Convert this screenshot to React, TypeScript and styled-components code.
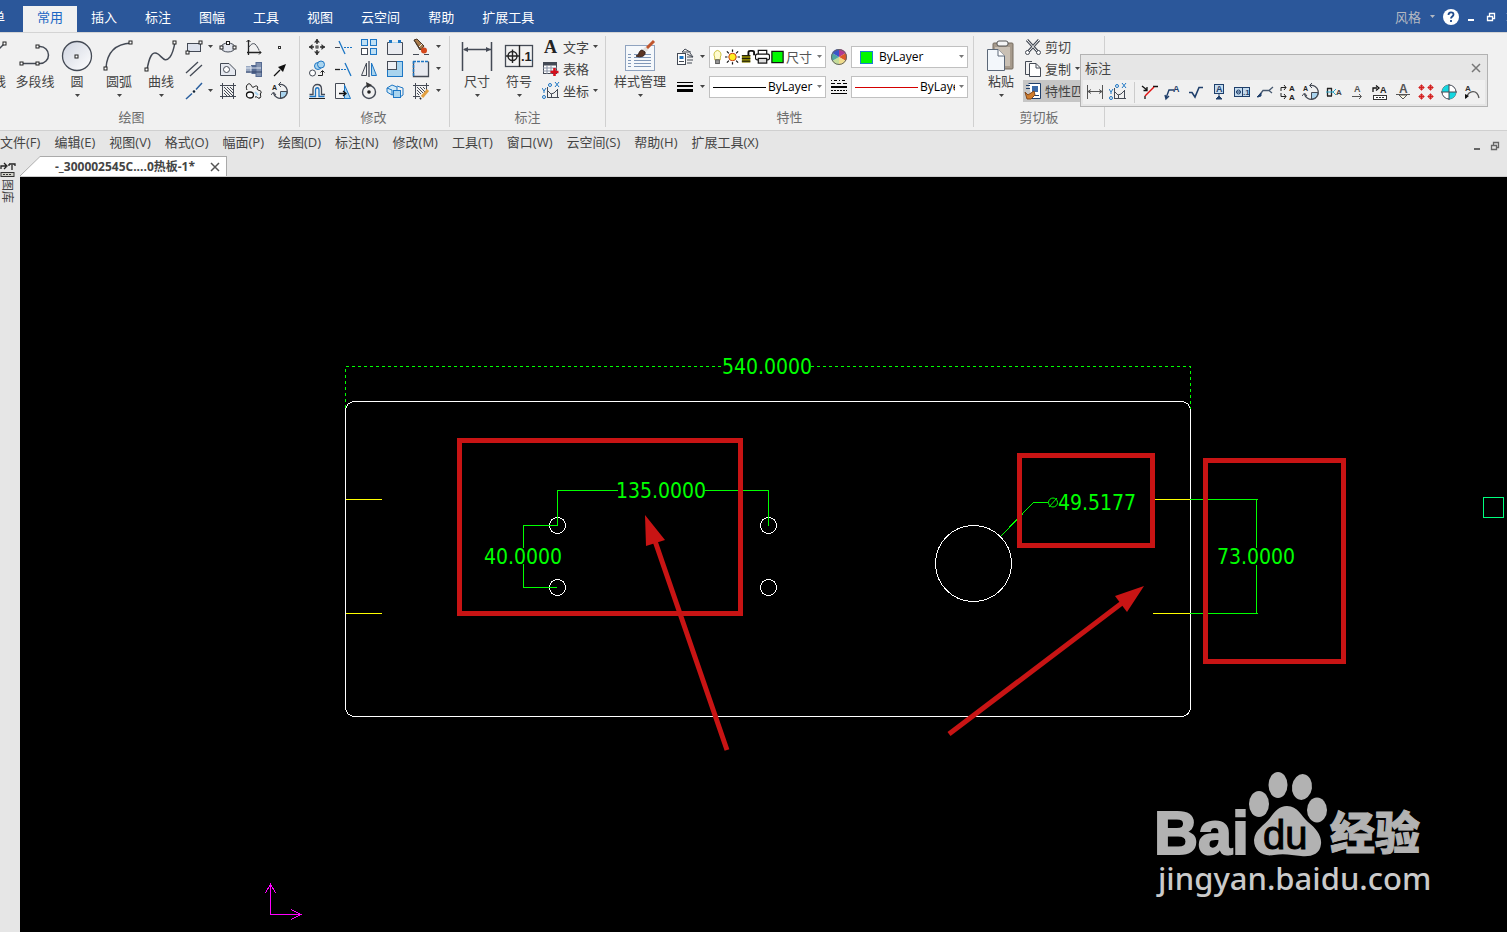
import React from 'react';
import styled, { createGlobalStyle, css } from 'styled-components';

const GlobalStyle = createGlobalStyle`
  * { box-sizing: border-box; }
  body {
    margin: 0;
    overflow: hidden;
    background: #e6e6e6;
    color: #444;
    font: 13px/16px "Open Sans", "Noto Sans CJK SC", sans-serif;
  }
  button, select { font: inherit; color: inherit; }
`;

const plainButton = css`
  border: 0;
  margin: 0;
  padding: 0;
  background: none;
  white-space: nowrap;
`;

const Page = styled.div`
  position: relative;
  display: flex;
  flex-direction: column;
  min-height: 100vh;
  overflow: hidden;
`;

/* ---------- title tabs ---------- */

const TitleBar = styled.header`
  display: flex;
  justify-content: space-between;
  height: 32px;
  background: #2b579a;
  overflow: hidden;
`;

const TabList = styled.nav`
  display: flex;
  align-items: flex-end;
  margin-left: -35px;
`;

const RibbonTab = styled.button<{ $active?: boolean; $first?: boolean }>`
  ${plainButton}
  height: 26px;
  padding: 0 14px 4px;
  margin-right: ${p => (p.$first ? 4 : 0)}px;
  color: ${p => (p.$active ? '#1a66c4' : '#fff')};
  background: ${p => (p.$active ? '#f1f1f1' : 'transparent')};
`;

const TitleTools = styled.div`
  display: flex;
  align-items: center;
  gap: 2px;
  height: 34px;
  margin-right: -13px;
  flex: none;
`;

const StyleButton = styled.button`
  ${plainButton}
  display: flex;
  align-items: center;
  gap: 8px;
  padding-right: 4px;
  color: #b4b9c2;
`;

const IconButton = styled.button`
  ${plainButton}
  display: flex;
  align-items: center;
  justify-content: center;
  width: 18px;
  height: 18px;
`;

/* ---------- ribbon ---------- */

const Ribbon = styled.section`
  display: flex;
  height: 99px;
  padding: 3px 0;
  background: #f1f1f1;
  border-top: 1px solid #d4d4d4;
  border-bottom: 1px solid #d0d0d0;
  overflow: hidden;
`;

const Group = styled.div<{ $width: number; $pad?: number }>`
  display: flex;
  flex-direction: column;
  flex: none;
  width: ${p => p.$width}px;
  padding-left: ${p => p.$pad ?? 0}px;
  border-right: 1px solid #d0d0d0;
`;

const GroupBody = styled.div`
  display: flex;
  height: 72px;
`;

const GroupTitle = styled.div<{ $shift?: boolean }>`
  line-height: 18px;
  text-align: center;
  color: #6d6d6d;
  padding-right: ${p => (p.$shift ? 36 : 6)}px;
`;

const BigButton = styled.button<{ $wide?: boolean; $cut?: boolean }>`
  ${plainButton}
  display: flex;
  flex: none;
  flex-direction: column;
  align-items: center;
  width: ${p => (p.$wide ? 56 : 42)}px;
  margin-left: ${p => (p.$cut ? -28 : 0)}px;
  padding-top: 2px;
`;

const BigLabel = styled.span`
  line-height: 14px;
`;

const ArrowSlot = styled.span`
  display: flex;
  align-items: center;
  height: 16px;
`;

const ToolGrid = styled.div<{ $cols: string }>`
  display: grid;
  grid-template-columns: ${p => p.$cols};
  grid-auto-rows: 22px;
  align-items: center;
  justify-items: center;
`;

const ToolButton = styled.button`
  ${plainButton}
  display: flex;
  justify-content: center;
`;

const Rows = styled.div`
  display: flex;
  flex-direction: column;
`;

const RowButton = styled.button<{ $pressed?: boolean }>`
  ${plainButton}
  display: flex;
  align-items: center;
  gap: 3px;
  height: 22px;
  padding: 0 1px;
  margin-left: 1px;
  background: ${p => (p.$pressed ? '#c6c6c6' : 'none')};
`;

const Properties = styled.div`
  display: grid;
  grid-template-columns: 22px 13px 117px 25px 117px;
  grid-auto-rows: 22px;
  row-gap: 8px;
  padding: 10px 0 0 6px;
  align-items: center;
  justify-items: center;
`;

const Combo = styled.label<{ $tight?: boolean }>`
  display: flex;
  align-items: center;
  width: 117px;
  height: 22px;
  padding-left: ${p => (p.$tight ? 0 : 3)}px;
  background: #fff;
  border: 1px solid #c0c0c0;
  color: #000;
  font-size: 12px;
`;

const ComboSelect = styled.select<{ $large?: boolean; $soft?: boolean; $gap?: number }>`
  flex: 1;
  min-width: 0;
  height: 20px;
  padding: 0;
  margin-left: ${p => p.$gap ?? 2}px;
  border: 0;
  appearance: none;
  background: none;
  font-size: ${p => (p.$large ? 13 : 12)}px;
  color: ${p => (p.$soft ? '#555' : '#000')};
`;

const ComboArrow = styled.span`
  display: flex;
  flex: none;
  justify-content: center;
  width: 12px;
  color: #777;
`;

const Swatch = styled.span`
  width: 13px;
  height: 13px;
  margin: 0 0 0 5px;
  border: 1px solid #1a7fd0;
  background: #00f800;
`;

const Rule = styled.span<{ $red?: boolean }>`
  width: ${p => (p.$red ? 63 : 53)}px;
  flex: none;
  height: 1px;
  background: ${p => (p.$red ? '#d40000' : '#000')};
`;

/* ---------- floating tool bar ---------- */

const FloatPanel = styled.aside`
  position: absolute;
  top: 54px;
  right: 19px;
  width: 408px;
  height: 53px;
  padding: 0 2px;
  background: #e6e6e6;
  border: 1px solid #b2b2b2;
`;

const FloatHead = styled.div`
  display: flex;
  align-items: center;
  justify-content: space-between;
  height: 25px;
  padding: 1px 0 0 2px;
`;

const FloatTools = styled.div`
  display: flex;
  align-items: center;
  height: 24px;
  background: #f0f0f0;
`;

const FloatTool = styled.button`
  ${plainButton}
  display: flex;
  justify-content: center;
  width: 23px;
`;

const FloatDivider = styled.span`
  width: 1px;
  height: 21px;
  margin: 0 3px 0 5px;
  background: #ccc;
`;

/* ---------- menu bar, document tabs ---------- */

const MenuBar = styled.nav`
  display: flex;
  justify-content: space-between;
  height: 24px;
  overflow: hidden;
`;

const MenuItems = styled.div`
  display: flex;
  gap: 14px;
  height: 22px;
`;

const MenuItem = styled.button`
  ${plainButton}
`;

const MenuTools = styled.div`
  display: flex;
  align-items: center;
  height: 30px;
  margin-right: -15px;
  color: #666;
`;

const Workspace = styled.div`
  display: flex;
  flex: 1;
`;

const SideDock = styled.div`
  display: flex;
  flex-direction: column;
  flex: none;
  width: 20px;
  padding-top: 6px;
`;

const SideTab = styled.button`
  ${plainButton}
  display: flex;
  flex-direction: column;
  align-items: flex-start;
  width: 15px;
`;

const SideLabel = styled.span`
  writing-mode: vertical-rl;
  text-orientation: sideways;
  font-size: 12px;
  line-height: 14px;
`;

const MainArea = styled.main`
  display: flex;
  flex-direction: column;
  flex: 1;
  min-width: 0;
`;

const DocTabs = styled.div`
  display: flex;
  align-items: flex-end;
  height: 22px;
  border-bottom: 1px solid #ccc;
`;

const DocTab = styled.div`
  display: flex;
  align-items: center;
  height: 20px;
  padding-left: 15px;
  padding-right: 2px;
  background: #fff;
  border-top: 1px solid #aaa;
  border-right: 1px solid #aaa;
  font-weight: 700;
  font-size: 12px;
  gap: 11px;
`;

const DocCorner = styled.svg`
  display: block;
  flex: none;
`;

const Canvas = styled.div`
  flex: 1;
  background: #000;
  overflow: hidden;
`;

const Drawing = styled.svg`
  display: block;
`;

/* ---------- icons ---------- */

const INK = '#444a55';
const BLUE = '#1d76c4';
const SKY = '#a9d4ee';
const NAVY = '#1f3f6b';

const Caret = ({ color = '#444' }: { color?: string }) => (
  <svg width="7" height="4" viewBox="0 0 7 4" aria-hidden="true">
    <path d="M1 0H6L3.5 3Z" fill={color} />
  </svg>
);

const Knob = ({ x, y }: { x: number; y: number }) => (
  <rect x={x - 1.5} y={y - 1.5} width="3" height="3" fill="#fff" stroke="#222" />
);

const Letter = ({ x, y, size = 8, children, fill = '#222' }: {
  x: number; y: number; size?: number; children: string; fill?: string;
}) => (
  <text x={x} y={y} fontSize={size} fontWeight="700" fontFamily="Liberation Sans, sans-serif" fill={fill} stroke="none">
    {children}
  </text>
);

const coordinate = (
  <>
    <path d="M5.500 5V16M5 15.500H17M5 8L9 12L12 11L16 7M15.500 7V15M9.500 12V15" stroke={INK} />
    <path d="M0 6L2 9M4 6L2 9V11M13 0L17 5M17 0L13 5" stroke={BLUE} />
    <circle cx="2" cy="15" r="1.500" stroke={BLUE} />
    <circle cx="8" cy="3" r="1.500" stroke={BLUE} />
  </>
);

const balloon = (
  <>
    <path d="M8 2.500A7 7 0 1 1 2.500 11" stroke={INK} strokeWidth="1.300" />
    <path d="M9.500 9.500H16A6.500 6.500 0 0 1 9.500 16Z" fill={SKY} stroke={INK} />
    <path d="M10 0L7.500 2.500L10 5M0 13L2.500 10L5 13" stroke={INK} />
    <Letter x={1} y={8} size={7}>A</Letter>
  </>
);

const small: Record<string, React.ReactNode> = {
  rect: (
    <>
      <rect x="2.500" y="5.500" width="13" height="8" fill="#dde2ec" stroke={INK} />
      <Knob x={15.5} y={4.5} /><Knob x={2.5} y={14.5} />
    </>
  ),
  parallel: <path d="M1 13L13 2M5 16L17 5" stroke={INK} strokeWidth="1.300" />,
  axis: (
    <>
      <path d="M1 17L7 11.500M11 7.500L17 1" stroke="#2a5f9e" strokeWidth="1.500" />
      <circle cx="9" cy="9.500" r="1.300" fill="#123" />
    </>
  ),
  ellipse: (
    <>
      <ellipse cx="9" cy="9.500" rx="7" ry="4.500" fill="#e3e6ee" stroke={INK} />
      <Knob x={9} y={5} /><Knob x={2.5} y={9.5} /><Knob x={15.5} y={9.5} />
    </>
  ),
  shape: (
    <>
      <path d="M1.500 3.500H10L16.500 10V15.500H1.500Z" fill="#e6e9f0" stroke={INK} />
      <circle cx="7.500" cy="9.500" r="3" fill="#fff" stroke={INK} />
    </>
  ),
  hatch: (
    <>
      <path d="M3.500 1V17M14.500 1V17M1 3.500H17M1 14.500H17" stroke={INK} />
      <path d="M5 8L11 14M5 5L14 14M8 5L14 11M11 5L14 8M5 11L8 14" stroke={INK} />
    </>
  ),
  curve: (
    <>
      <path d="M3.500 2V17M2 14.500H16" stroke="#222" strokeWidth="1.300" />
      <path d="M1.500 4L3.500 2L5.500 4M14 12.500L16 14.500L14 16.500" stroke="#222" />
      <path d="M4 9C6 6 8 5 10 6C12 8 13 10 14 12" stroke={INK} />
    </>
  ),
  shaft: (
    <>
      <rect x="1" y="6" width="5" height="7" fill="#9aa9c2" />
      <rect x="6" y="5" width="5" height="9" fill="#566b92" />
      <rect x="11" y="2.500" width="5.500" height="14" fill="#8292b0" stroke="#566b92" />
      <path d="M1 8H16M6 6V14" stroke="#dfe6f2" />
      <path d="M1 12H17" stroke="#33456a" />
    </>
  ),
  wave: (
    <>
      <path d="M2 8C0 4 3 1 5 2C7 3 6 6 9 5C11 3 14 4 12 7C13 9 17 8 16 11C14 12 17 14 15 16C12 17 13 14 10 15" stroke="#111" />
      <ellipse cx="5" cy="13" rx="3.500" ry="3" fill="#fff" stroke="#111" strokeWidth="1.300" />
      <path d="M10 10L13 13" stroke={SKY} strokeWidth="2" />
    </>
  ),
  dot: <rect x="7.500" y="8.500" width="2" height="2" fill="#fff" stroke="#333" />,
  arrow: (
    <>
      <path d="M3 16L9 10" stroke="#111" strokeWidth="1.300" />
      <path d="M15 4L12 12L7 7Z" fill="#111" />
    </>
  ),
  balloon,
  move: (
    <>
      <path d="M9 1V6M9 12V17M1 9H6M12 9H17" stroke="#333" strokeWidth="1.500" />
      <path d="M9 1L6 4.500H12ZM9 17L6 13.500H12ZM1 9L4.500 6V12ZM17 9L13.500 6V12Z" fill="#333" />
      <rect x="8" y="8" width="2" height="2" fill="#fff" stroke="#333" />
    </>
  ),
  copyShape: (
    <>
      <circle cx="4.500" cy="13" r="3" fill="#fff" stroke={INK} />
      <circle cx="10" cy="6" r="3.500" fill={SKY} stroke={BLUE} />
      <circle cx="13" cy="4.500" r="3.500" fill={SKY} stroke={BLUE} />
      <path d="M10 15.500H14.500V11M12.500 12.500L14.500 10.500L16.500 12.500" stroke="#222" />
    </>
  ),
  offset: (
    <>
      <path d="M1.500 12.500H5V7C5 1 13.500 1 13.500 7V12.500H17" stroke={INK} strokeWidth="1.300" />
      <path d="M1.500 14.500H7.500V8C7.500 5 11 5 11 8V14.500H16.500" stroke={BLUE} strokeWidth="1.300" />
      <path d="M1 16.500H17" stroke="#222" />
    </>
  ),
  trim: (
    <>
      <path d="M1 9.500H6" stroke={INK} />
      <path d="M5 3L11 16" stroke={BLUE} strokeWidth="1.300" />
      <path d="M10 9.500H18" stroke={BLUE} strokeDasharray="2 1" />
    </>
  ),
  extend: (
    <>
      <path d="M1 9.500H6" stroke="#222" strokeWidth="1.300" />
      <path d="M7 9.500H13" stroke={BLUE} strokeDasharray="2 1" />
      <path d="M11 3L17 16" stroke={BLUE} strokeWidth="1.300" />
    </>
  ),
  stretch: (
    <>
      <path d="M1.500 1.500H10.500V16.500H1.500Z" fill="#f6f6f6" stroke={INK} />
      <path d="M10.500 3L16.500 16.500H10.500Z" fill={SKY} stroke={BLUE} />
      <path d="M5 11.500H11M9 9L12 11.500L9 14" stroke="#111" strokeWidth="1.300" />
    </>
  ),
  array: (
    <>
      <rect x="1.500" y="1.500" width="6" height="6" fill="#bfe0f4" stroke={BLUE} />
      <rect x="10.500" y="1.500" width="6" height="6" fill="#bfe0f4" stroke={BLUE} />
      <rect x="1.500" y="10.500" width="6" height="6" fill="#fff" stroke={INK} />
      <rect x="10.500" y="10.500" width="6" height="6" fill="#bfe0f4" stroke={BLUE} />
    </>
  ),
  mirror: (
    <>
      <path d="M6.500 3V15.500H1.500Z" fill="#eee" stroke={INK} />
      <path d="M9 1V17" stroke={INK} strokeWidth="1.300" />
      <path d="M11.500 3V15.500H16.500Z" fill={SKY} stroke={BLUE} />
    </>
  ),
  rotate: (
    <>
      <circle cx="9" cy="10" r="6.500" stroke={INK} strokeWidth="1.400" />
      <circle cx="9" cy="10" r="1.800" fill="#222" />
      <path d="M6 0L12 3L7 6Z" fill="#333" />
    </>
  ),
  breakAt: (
    <>
      <path d="M4 4.500H1.500V16.500H16.500V4.500H14" fill="#e9ebf0" stroke={INK} />
      <path d="M6 4.500H12" stroke={SKY} />
      <rect x="3" y="2" width="3" height="3" fill={BLUE} /><rect x="12" y="2" width="3" height="3" fill={BLUE} />
    </>
  ),
  scale: (
    <>
      <rect x="1.500" y="1.500" width="15" height="15" fill={SKY} stroke={BLUE} />
      <rect x="1.500" y="1.500" width="9" height="8" fill="#eef0f4" stroke={INK} />
    </>
  ),
  block: (
    <>
      <path d="M1 6L6 3L11 5V11L6 13L1 10ZM1 6L6 8V13" fill="#d2eaf7" stroke={BLUE} />
      <path d="M11 4L17 6V13L14 15" stroke={BLUE} />
      <rect x="7.500" y="8.500" width="7" height="7" fill={SKY} stroke={BLUE} />
    </>
  ),
  erase: (
    <>
      <path d="M2 2L11 9L8 12Z" fill="#bd9461" stroke="#3a2f28" />
      <path d="M2 2L5 1L12 8L9 12Z" fill="#a87b4c" stroke="#4a3626" />
      <path d="M7 9L10 6" stroke="#eee" />
      <circle cx="12" cy="12.500" r="3" fill="#d4481c" />
      <path d="M1 16.500H7M12 16.500H17" stroke={INK} />
    </>
  ),
  region: (
    <>
      <path d="M1.500 1.500V16.500H16.500V1.500" fill="#e8eaf0" stroke={INK} strokeWidth="1.300" />
      <path d="M1 1.500H17M1.500 1V16" stroke={BLUE} strokeWidth="1.500" strokeDasharray="3 1" />
    </>
  ),
  hatchEdit: (
    <>
      <path d="M3.500 1V17M14.500 1V8M1 3.500H17M1 14.500H8" stroke={INK} />
      <path d="M5 8L9 12M5 5L11 11M8 5L13 10M5 11L7 13M11 5L13 7" stroke={INK} />
      <path d="M16 8L10 15" stroke="#e2a041" strokeWidth="3" />
      <path d="M9 16L8 17" stroke="#222" strokeWidth="2" />
    </>
  ),
  table: (
    <>
      <rect x="1.500" y="2.500" width="13" height="11" fill="#fff" stroke={INK} />
      <path d="M1 4H15" stroke={INK} strokeWidth="3" />
      <path d="M1 8H15M1 11H15M5 5V14M9 5V14" stroke="#8a93a5" />
      <path d="M12.500 8V16M8.500 12H16.500" stroke="#d40f1c" strokeWidth="2.600" />
    </>
  ),
  letterA: (
    <text x="2" y="15" fontSize="18" fontWeight="700" fontFamily="Liberation Serif, serif" fill="#222">A</text>
  ),
  coordinate,
  layers: (
    <>
      <path d="M6 4L9 1L14 4M6 4H15M14 5L17 9M11 6L17 9M11 9H17M11 12H17M11 15H16" stroke={INK} />
      <rect x="1.500" y="5.500" width="8" height="11" fill="#fff" stroke={INK} />
      <rect x="3.500" y="8" width="4" height="3" fill={BLUE} />
      <path d="M3 13.500H8" stroke={INK} />
    </>
  ),
  weights: (
    <>
      <rect x="1" y="4" width="16" height="1" fill="#000" />
      <rect x="1" y="7" width="16" height="2" fill="#000" />
      <rect x="1" y="11" width="16" height="3" fill="#000" />
    </>
  ),
  types: (
    <g shapeRendering="crispEdges">
      <path d="M1 2.500H17" stroke="#000" strokeDasharray="1 2 3 2" />
      <path d="M1 5.500H17" stroke="#000" strokeDasharray="4 2" />
      <path d="M1 9H17" stroke="#000" strokeWidth="2" />
      <path d="M1 12.500H17" stroke="#000" strokeDasharray="2 1" />
      <path d="M1 15.500H17" stroke="#000" />
    </g>
  ),
  wheel: (
    <>
      <path d="M9 9V1A8 8 0 0 1 15.900 5Z" fill="#b33a8e" />
      <path d="M9 9L15.900 5A8 8 0 0 1 15.900 13Z" fill="#dd5a28" />
      <path d="M9 9L15.900 13A8 8 0 0 1 9 17Z" fill="#f0dc8c" />
      <path d="M9 9V17A8 8 0 0 1 2.100 13Z" fill="#c5dc9a" />
      <path d="M9 9L2.100 13A8 8 0 0 1 2.100 5Z" fill="#51a8a0" />
      <path d="M9 9L2.100 5A8 8 0 0 1 9 1Z" fill="#3b55c8" />
      <circle cx="9" cy="9" r="7.500" stroke="#666" />
    </>
  ),
  cut: (
    <>
      <path d="M3 2L14 14M15 2L4 14" stroke={INK} strokeWidth="3" />
      <path d="M3 2L13 13M15 2L5 13" stroke="#fff" />
      <circle cx="3.500" cy="14.500" r="2" fill="#fff" stroke={INK} /><circle cx="14.500" cy="14.500" r="2" fill="#fff" stroke={INK} />
    </>
  ),
  copy: (
    <>
      <path d="M8 1.500H1.500V14.500H5" stroke={INK} />
      <path d="M5.500 3.500H12L16.500 8V16.500H5.500Z" fill="#fff" stroke={INK} />
      <path d="M12 3.500V8H16.500" stroke={INK} />
    </>
  ),
  match: (
    <>
      <path d="M4.500 1.500H16.500V16.500H8" fill="#fff" stroke={NAVY} />
      <rect x="8" y="4" width="6" height="6" fill="#3a6aa8" />
      <path d="M2 3.500H6M2 6.500H6M11 13.500H15" stroke={NAVY} />
      <path d="M1 10L4 13L10 9L11 13L7 17H3Z" fill="#cf7c2c" stroke="#84481a" />
    </>
  ),
  dimension: <path d="M1.500 2V16M16.500 2V16M2 8.500H16M5 6.500L2 8.500L5 10.500M13 6.500L16 8.500L13 10.500" stroke="#555" />,
  chamfer: (
    <>
      <path d="M1 3L6 7M6 4V7.500H2.500M12 3.500H17M4 16V13" stroke="#111" strokeWidth="1.300" />
      <path d="M4 13L13 4" stroke="#e01010" strokeWidth="1.500" />
    </>
  ),
  leaderA: (
    <>
      <path d="M2 15L5 7H10M1 12L2 16L5 13" stroke={NAVY} strokeWidth="1.400" />
      <Letter x={9} y={9} size={9} fill={NAVY}>A</Letter>
    </>
  ),
  rough: <path d="M2 9.500H5L8 14L12 4.500H16" stroke={NAVY} strokeWidth="1.600" />,
  datum: (
    <>
      <rect x="4.500" y="1.500" width="9" height="9" fill="#c5dbee" stroke={NAVY} />
      <Letter x={6} y={9} size={9} fill={NAVY}>A</Letter>
      <path d="M9 11V14M9 13L6 16H12Z" fill={NAVY} stroke={NAVY} />
    </>
  ),
  tolerance: (
    <>
      <rect x="1.500" y="4.500" width="15" height="9" fill="#c5dbee" stroke={NAVY} />
      <circle cx="5.500" cy="9" r="2" stroke={NAVY} /><path d="M3 9H8M9.500 5V13" stroke={NAVY} />
      <Letter x={10} y={12} size={8} fill={NAVY}>.1</Letter>
    </>
  ),
  leader: (
    <>
      <path d="M2 14L7 7.500H13L17 4M13 7.500L16 10" stroke="#46586f" strokeWidth="1.300" />
      <path d="M1 14L5 10L5 13Z" fill={NAVY} stroke={NAVY} />
    </>
  ),
  swapA: (
    <>
      <path d="M7 4.500H2V8M5 2L7 4.500L5 7M2 10V13.500H7M5 11L7 13.500L5 16" stroke="#222" />
      <Letter x={10} y={8} size={8}>A</Letter><Letter x={10} y={17} size={8}>A</Letter>
    </>
  ),
  gapA: (
    <>
      <path d="M2.500 5V13M6.500 5V13M2 5.500H7M2 13H7" stroke="#222" strokeWidth="1.300" />
      <path d="M11 6L8 9L11 12M1 9H8" stroke="#2aa6c8" />
      <Letter x={11} y={12} size={8} fill="#444">A</Letter>
    </>
  ),
  arrowA: (
    <>
      <Letter x={6} y={9} size={9} fill="#555">A</Letter>
      <path d="M4 13.500H13M11 11L13.500 13.500L11 16" stroke="#555" />
    </>
  ),
  rulerA: (
    <>
      <path d="M2 9V5H6M5 2.500L8 5L5 7.500" stroke="#111" strokeWidth="1.300" />
      <Letter x={9} y={10} size={9}>A</Letter>
      <rect x="2.500" y="12.500" width="13" height="4" fill="#fff" stroke="#333" /><path d="M5 14.500H13" stroke="#333" strokeDasharray="2 1" />
    </>
  ),
  markA: (
    <>
      <Letter x={5} y={10} size={12} fill="#555">A</Letter>
      <path d="M2 11.500H16M5 12L9 16L13 12Z" fill="#fffbe8" stroke="#555" />
    </>
  ),
  holes: (
    <>
      {[[4.5, 4.5], [13.5, 4.5], [4.5, 13.5], [13.5, 13.5]].map(([x, y]) => (
        <g key={`${x}-${y}`} stroke="#d32020">
          <circle cx={x} cy={y} r="2" fill="#f4c4bb" />
          <path d={`M${x - 3} ${y}H${x + 3}M${x} ${y - 3}V${y + 3}`} />
        </g>
      ))}
    </>
  ),
  center: (
    <>
      <circle cx="9" cy="9" r="7" fill="#fff" stroke={INK} />
      <path d="M9 9V2A7 7 0 0 0 2 9ZM9 9V16A7 7 0 0 0 16 9Z" fill="#14d7e0" />
      <path d="M9 1V17M1 9H17" stroke={INK} />
    </>
  ),
  arcA: (
    <>
      <Letter x={2} y={8} size={8} fill="#333">A</Letter>
      <path d="M3 15C6 7 14 6 16 15" stroke="#555" strokeWidth="1.300" /><path d="M2 16V11L6 13Z" fill="#111" />
    </>
  ),
  bulb: (
    <>
      <path d="M9 2A4.500 4.500 0 0 0 6 9V12H12V9A4.500 4.500 0 0 0 9 2Z" fill="#fffcd0" stroke="#c9bd3a" />
      <rect x="7" y="12" width="4" height="4" fill="#999" stroke="#555" />
    </>
  ),
  sun: (
    <>
      <path d="M9 1V17M1 9H17M3 3L15 15M15 3L3 15" stroke="#111" strokeWidth="1.300" />
      <circle cx="9" cy="9" r="5.500" fill="#fff" />
      <circle cx="9" cy="9" r="4" fill="#ffee22" stroke="#c03018" />
    </>
  ),
  lock: (
    <>
      <path d="M10 8V4Q10 2.500 12 2.500H14Q16 2.500 16 4V7" stroke="#111" strokeWidth="2" />
      <rect x="3" y="7" width="9" height="8" fill="#8a8200" /><path d="M3 7.500H12M3 10.500H12M3 13.500H12" stroke="#111" />
    </>
  ),
  printer: (
    <>
      <path d="M4.500 6V2H13.500V6" fill="#fff" stroke="#111" strokeWidth="1.300" />
      <rect x="1.500" y="6" width="15" height="6" rx="2" fill="#fff" stroke="#111" strokeWidth="1.300" />
      <rect x="4.500" y="10.500" width="9" height="5" fill="#ddd" stroke="#111" strokeWidth="1.300" />
    </>
  ),
  layerColor: <rect x="3" y="3" width="12" height="12" fill="#00f800" stroke="#111" strokeWidth="1.300" />,
  sideRuler: (
    <>
      <path d="M1 8V5H6M4 2L7 5L4 8M9 3H15V5M9 3V5M12 4V9" stroke="#222" strokeWidth="1.300" />
      <rect x="1" y="11.500" width="13" height="4" fill="#d0d0c8" stroke="#333" /><path d="M3 13.500H11" stroke="#333" strokeDasharray="2 1" />
    </>
  ),
};

const Icon = ({ name }: { name: string }) => (
  <svg width="18" height="18" viewBox="0 0 18 18" fill="none" aria-hidden="true">{small[name]}</svg>
);

const LayerIcon = ({ name }: { name: string }) => (
  <svg width="15" height="18" viewBox="1 0 16 18" fill="none" aria-hidden="true">{small[name]}</svg>
);

const big: Record<string, React.ReactNode> = {
  line: <><path d="M5 30L30 5" stroke={INK} strokeWidth="1.500" /><Knob x={29.5} y={5.5} /></>,
  polyline: (
    <>
      <path d="M4 25.500H23A8.500 8.500 0 0 0 23 8.500H20" stroke={INK} strokeWidth="1.500" />
      <Knob x={4.5} y={25.5} /><Knob x={20.5} y={25.5} /><Knob x={20.5} y={8.5} />
    </>
  ),
  circle: (
    <>
      <defs>
        <linearGradient id="disc" x1="0" y1="0" x2="1" y2="1">
          <stop offset="0" stopColor="#cfd4e0" /><stop offset="1" stopColor="#fff" />
        </linearGradient>
      </defs>
      <circle cx="18" cy="18" r="14.500" fill="url(#disc)" stroke={INK} strokeWidth="1.300" />
      <Knob x={17.5} y={18.5} />
    </>
  ),
  arc: <><path d="M5 30C6 14 14 6 30 5" stroke={INK} strokeWidth="1.500" /><Knob x={4.5} y={30.5} /><Knob x={29.5} y={4.5} /></>,
  spline: (
    <>
      <path d="M4 32C6 20 9 12 15 16C20 20 22 25 27 19C30 15 31 10 32 4" stroke={INK} strokeWidth="1.500" />
      <Knob x={3.5} y={31.5} /><Knob x={31.5} y={4.5} />
    </>
  ),
  dimension: (
    <>
      <path d="M3.500 4V33M32.500 4V33M5 11.500H32" stroke={INK} strokeWidth="1.500" />
      <path d="M4 11.500L9 9V14ZM32 11.500L27 9V14Z" fill={INK} />
    </>
  ),
  symbol: (
    <>
      <rect x="4.500" y="7.500" width="27" height="21" fill="#f2f2f2" stroke={INK} strokeWidth="1.300" />
      <path d="M18.500 7V29M5 18H18M11.500 11.500V25" stroke="#222" strokeWidth="1.400" />
      <circle cx="11.500" cy="18" r="4.500" stroke="#222" strokeWidth="1.400" />
      <Letter x={20} y={23} size={13}>.1</Letter>
    </>
  ),
  style: (
    <>
      <rect x="3.500" y="7.500" width="29" height="25" fill="#f5f8fb" stroke="#8fa3bf" />
      <path d="M6 16.500H9M6 19.500H9M6 22.500H9M6 25.500H9M6 28.500H9M12 16.500H29M12 19.500H29M12 22.500H29M12 25.500H29M12 28.500H29" stroke="#7f97b8" />
      <path d="M32 3L24 11" stroke="#c0552c" strokeWidth="3" />
      <path d="M25 10L21 14" stroke="#e4e0dc" strokeWidth="4" />
      <path d="M20 12C16 13 18 17 14 18C19 20 24 18 23 14Z" fill="#5a3422" stroke="#33201a" />
    </>
  ),
  paste: (
    <>
      <rect x="10" y="5" width="20" height="26" rx="1" fill="#a69a8c" stroke="#766c60" />
      <rect x="14" y="3" width="11" height="5" rx="2" fill="#f4f4f4" stroke="#555" />
      <path d="M12 9H27V28H12Z" fill="#c9c0b4" />
      <path d="M4.500 11.500H15L21.500 18V32.500H4.500Z" fill="#f3f7fb" stroke="#5c6878" />
      <path d="M15 11.500V18H21.500" fill="#fff" stroke="#5c6878" />
    </>
  ),
};

const BigTool = ({ icon, label, wide, cut, menu = true }: {
  icon: string; label: string; wide?: boolean; cut?: boolean; menu?: boolean;
}) => (
  <BigButton $wide={wide} $cut={cut} type="button">
    <svg width="36" height="36" viewBox="0 0 36 36" fill="none" aria-hidden="true">{big[icon]}</svg>
    <BigLabel>{label}</BigLabel>
    {menu && <ArrowSlot><Caret /></ArrowSlot>}
  </BigButton>
);

const Cell = ({ name }: { name: string }) =>
  name === 'caret' ? <ToolButton type="button" aria-label="more"><Caret /></ToolButton>
    : name === '' ? <span />
      : <ToolButton type="button" aria-label={name}><Icon name={name} /></ToolButton>;

const RowTool = ({ icon, label, menu, pressed }: { icon: string; label: string; menu?: boolean; pressed?: boolean }) => (
  <RowButton type="button" $pressed={pressed}>
    <Icon name={icon} />
    <span>{label}</span>
    {menu && <Caret />}
  </RowButton>
);

const WindowGlyph = ({ kind, color }: { kind: 'min' | 'restore' | 'close'; color: string }) => (
  <svg width="10" height="10" viewBox="0 0 10 10" fill="none" stroke={color} aria-hidden="true">
    {kind === 'min' && <path d="M2 8H8" strokeWidth="2" />}
    {kind === 'restore' && <path d="M3.500 4V1.500H8.500V6.500H7M1.500 4.500H6.500V8.500H1.500ZM1 4.500H7M3 1.500H9" strokeWidth="1.300" />}
    {kind === 'close' && <path d="M1 1L9 9M9 1L1 9" strokeWidth="1.500" />}
  </svg>
);

const TABS = ['菜单', '常用', '插入', '标注', '图幅', '工具', '视图', '云空间', '帮助', '扩展工具'];
const MENUS = ['文件(F)', '编辑(E)', '视图(V)', '格式(O)', '幅面(P)', '绘图(D)', '标注(N)', '修改(M)', '工具(T)', '窗口(W)', '云空间(S)', '帮助(H)', '扩展工具(X)'];
const DRAW = ['rect', 'caret', 'ellipse', 'curve', 'dot', 'parallel', '', 'shape', 'shaft', 'arrow', 'axis', 'caret', 'hatch', 'wave', 'balloon'];
const MODIFY = ['move', 'trim', 'array', 'breakAt', 'erase', 'caret', 'copyShape', 'extend', 'mirror', 'scale', 'region', 'caret', 'offset', 'stretch', 'rotate', 'block', 'hatchEdit', 'caret'];
const FLOAT = ['chamfer', 'leaderA', 'rough', 'datum', 'tolerance', 'leader', 'swapA', 'balloon', 'gapA', 'arrowA', 'rulerA', 'markA', 'holes', 'center', 'arcA'];

const GREEN = '#00ff00';
const RED = '#c81414';

const CadDrawing = () => (
  <Drawing width="1487" height="755" viewBox="20 177 1487 755" fill="none" role="img" aria-label="零件图">
    <g shapeRendering="crispEdges" strokeWidth="1">
      <rect x="345.500" y="401.500" width="845" height="315" rx="9" stroke="#fff" />
      <path d="M345.500 408V366.500H722M811 366.500H1190.500V409" stroke={GREEN} strokeDasharray="3 3" />
      <path d="M346 499.500H382M346 613.500H382M1155 499.500H1190M1153 613.500H1190" stroke="#ff0" />
      <path d="M1190 499.500H1258M1190 613.500H1258M1256.500 499V548M1256.500 565V613" stroke={GREEN} />
      <g stroke="#fff">
        <circle cx="557.500" cy="525.500" r="8" /><circle cx="768.500" cy="525.500" r="8" />
        <circle cx="557.500" cy="587.500" r="8" /><circle cx="768.500" cy="587.500" r="8" />
        <circle cx="973.500" cy="563.500" r="38" />
      </g>
      <path d="M557.500 525V490.500H618M705 490.500H768.500V526" stroke={GREEN} />
      <path d="M558 525.500H523.500V548M523.500 564V587.500H557" stroke={GREEN} />
      <path d="M1000.500 536.500L1033.500 502.500H1048" stroke={GREEN} />
      <path d="M270.500 884V914.500H301M265.500 893L270.500 884L275.500 893M291 909.500L301 914.500L291 919.500" stroke="#f0f" />
      <rect x="1483.500" y="497.500" width="20" height="20" stroke="#00ff7f" />
    </g>
    <circle cx="1053" cy="502.500" r="4.500" stroke={GREEN} />
    <path d="M1049 507L1057 498" stroke={GREEN} />
    <g fill={GREEN} fontFamily="'DejaVu Sans Condensed', 'Noto Sans', sans-serif" fontSize="21" textAnchor="middle">
      <text x="767" y="374">540.0000</text>
      <text x="661" y="498">135.0000</text>
      <text x="523" y="564">40.0000</text>
      <text x="1097" y="510">49.5177</text>
      <text x="1256" y="564">73.0000</text>
    </g>
    <g stroke={RED} strokeWidth="5">
      <rect x="459.500" y="440.500" width="281" height="173" />
      <rect x="1019.500" y="455.500" width="133" height="90" />
      <rect x="1205.500" y="460.500" width="138" height="201" />
      <path d="M655 541L727 750M1122 603L949 734" />
    </g>
    <path d="M645 515L665 540L646 546ZM1144 586L1115 596L1127 612Z" fill={RED} />
    <g fill="#b2b2b2">
      <text x="1154" y="854" fontSize="61" fontWeight="700" fontFamily="'Liberation Sans', sans-serif" stroke="#b2b2b2" strokeWidth="2">Bai</text>
      <ellipse cx="1259" cy="804" rx="10" ry="13" />
      <ellipse cx="1278" cy="785" rx="9.500" ry="13" />
      <ellipse cx="1302" cy="787" rx="10" ry="13" transform="rotate(8 1302 787)" />
      <ellipse cx="1317" cy="810" rx="10" ry="12.500" />
      <path d="M1287 806C1298 806 1301 816 1308 822C1316 828 1322 836 1321 844C1320 855 1310 857 1301 856C1292 855 1284 853 1274 855C1263 857 1254 851 1254 840C1255 829 1264 826 1270 818C1275 811 1279 806 1287 806Z" />
      <text x="1330" y="850" fontSize="45" fontWeight="900" fontFamily="'Noto Sans CJK SC', sans-serif" stroke="#b2b2b2">经验</text>
    </g>
    <text x="1263" y="849" fontSize="40" fontFamily="'Liberation Sans', sans-serif" fill="#000" stroke="#000">du</text>
    <text x="1158" y="890" fontSize="31" fontWeight="500" fontFamily="'Noto Sans', sans-serif" fill="#cacaca">jingyan.baidu.com</text>
  </Drawing>
);

export default function App() {
  return (
    <Page>
      <GlobalStyle />
      <TitleBar>
        <TabList>
          {TABS.map((t, i) => <RibbonTab key={t} type="button" $first={i === 0} $active={i === 1}>{t}</RibbonTab>)}
        </TabList>
        <TitleTools>
          <StyleButton type="button">风格 <Caret color="#b4b9c2" /></StyleButton>
          <IconButton type="button" aria-label="帮助">
            <svg width="18" height="18" viewBox="0 0 18 18" fill="none" aria-hidden="true">
              <circle cx="9" cy="9" r="8" fill="#fff" />
              <path d="M6.500 7C6.500 3.500 11.500 3.500 11.500 6.500C11.500 8.500 9 8.500 9 10.500M9 12V14" stroke="#1f4a8c" strokeWidth="1.800" />
            </svg>
          </IconButton>
          <IconButton type="button" aria-label="最小化"><WindowGlyph kind="min" color="#fff" /></IconButton>
          <IconButton type="button" aria-label="还原"><WindowGlyph kind="restore" color="#fff" /></IconButton>
          <IconButton type="button" aria-label="关闭"><WindowGlyph kind="close" color="#fff" /></IconButton>
        </TitleTools>
      </TitleBar>

      <Ribbon>
        <Group $width={300}>
          <GroupBody>
            <BigTool icon="line" label="直线" cut />
            <BigTool icon="polyline" label="多段线" menu={false} />
            <BigTool icon="circle" label="圆" />
            <BigTool icon="arc" label="圆弧" />
            <BigTool icon="spline" label="曲线" />
            <ToolGrid $cols="24px 9px 26px 26px 26px">
              {DRAW.map((n, i) => <Cell key={i} name={n} />)}
            </ToolGrid>
          </GroupBody>
          <GroupTitle $shift>绘图</GroupTitle>
        </Group>
        <Group $width={150} $pad={4}>
          <GroupBody>
            <ToolGrid $cols="26px 26px 26px 26px 26px 9px">
              {MODIFY.map((n, i) => <Cell key={i} name={n} />)}
            </ToolGrid>
          </GroupBody>
          <GroupTitle>修改</GroupTitle>
        </Group>
        <Group $width={156} $pad={6}>
          <GroupBody>
            <BigTool icon="dimension" label="尺寸" />
            <BigTool icon="symbol" label="符号" />
            <Rows>
              <RowTool icon="letterA" label="文字" menu />
              <RowTool icon="table" label="表格" />
              <RowTool icon="coordinate" label="坐标" menu />
            </Rows>
          </GroupBody>
          <GroupTitle>标注</GroupTitle>
        </Group>
        <Group $width={368} $pad={6}>
          <GroupBody>
            <BigTool icon="style" label="样式管理" wide />
            <Properties>
              <ToolButton type="button" aria-label="图层"><Icon name="layers" /></ToolButton>
              <Caret />
              <Combo $tight>
                {['bulb', 'sun', 'lock', 'printer', 'layerColor'].map(n => <LayerIcon key={n} name={n} />)}
                <ComboSelect $soft $large $gap={1} aria-label="图层"><option>尺寸</option></ComboSelect>
                <ComboArrow><Caret color="#777" /></ComboArrow>
              </Combo>
              <ToolButton type="button" aria-label="颜色"><Icon name="wheel" /></ToolButton>
              <Combo>
                <Swatch />
                <ComboSelect $gap={6} aria-label="颜色"><option>ByLayer</option></ComboSelect>
                <ComboArrow><Caret color="#777" /></ComboArrow>
              </Combo>
              <ToolButton type="button" aria-label="线宽"><Icon name="weights" /></ToolButton>
              <Caret />
              <Combo>
                <Rule />
                <ComboSelect aria-label="线宽"><option>ByLayer</option></ComboSelect>
                <ComboArrow><Caret color="#777" /></ComboArrow>
              </Combo>
              <ToolButton type="button" aria-label="线型"><Icon name="types" /></ToolButton>
              <Combo>
                <Rule $red />
                <ComboSelect aria-label="线型"><option>ByLayer</option></ComboSelect>
                <ComboArrow><Caret color="#777" /></ComboArrow>
              </Combo>
            </Properties>
          </GroupBody>
          <GroupTitle>特性</GroupTitle>
        </Group>
        <Group $width={131} $pad={6}>
          <GroupBody>
            <BigTool icon="paste" label="粘贴" />
            <Rows>
              <RowTool icon="cut" label="剪切" />
              <RowTool icon="copy" label="复制" menu />
              <RowTool icon="match" label="特性匹配" pressed />
            </Rows>
          </GroupBody>
          <GroupTitle>剪切板</GroupTitle>
        </Group>
      </Ribbon>

      <MenuBar>
        <MenuItems>{MENUS.map(m => <MenuItem key={m} type="button">{m}</MenuItem>)}</MenuItems>
        <MenuTools>
          <IconButton type="button" aria-label="最小化文档"><WindowGlyph kind="min" color="#666" /></IconButton>
          <IconButton type="button" aria-label="还原文档"><WindowGlyph kind="restore" color="#666" /></IconButton>
          <IconButton type="button" aria-label="关闭文档"><WindowGlyph kind="close" color="#666" /></IconButton>
        </MenuTools>
      </MenuBar>

      <Workspace>
        <SideDock>
          <SideTab type="button">
            <Icon name="sideRuler" />
            <SideLabel>图库</SideLabel>
          </SideTab>
        </SideDock>
        <MainArea>
          <DocTabs>
            <DocCorner width="20" height="20" viewBox="0 0 20 20" aria-hidden="true">
              <path d="M0 20L20 0V20Z" fill="#fff" />
              <path d="M0 20L20 0.500" stroke="#aaa" />
            </DocCorner>
            <DocTab>
              <span>-_300002545C....0热板-1*</span>
              <IconButton type="button" aria-label="关闭标签"><WindowGlyph kind="close" color="#555" /></IconButton>
            </DocTab>
          </DocTabs>
          <Canvas><CadDrawing /></Canvas>
        </MainArea>
      </Workspace>

      <FloatPanel>
        <FloatHead>
          <span>标注</span>
          <IconButton type="button" aria-label="关闭工具条"><WindowGlyph kind="close" color="#777" /></IconButton>
        </FloatHead>
        <FloatTools>
          <FloatTool type="button" aria-label="尺寸标注"><Icon name="dimension" /></FloatTool>
          <FloatTool type="button" aria-label="坐标标注"><Icon name="coordinate" /></FloatTool>
          <FloatDivider />
          {FLOAT.map(n => <FloatTool key={n} type="button" aria-label={n}><Icon name={n} /></FloatTool>)}
        </FloatTools>
      </FloatPanel>
    </Page>
  );
}
